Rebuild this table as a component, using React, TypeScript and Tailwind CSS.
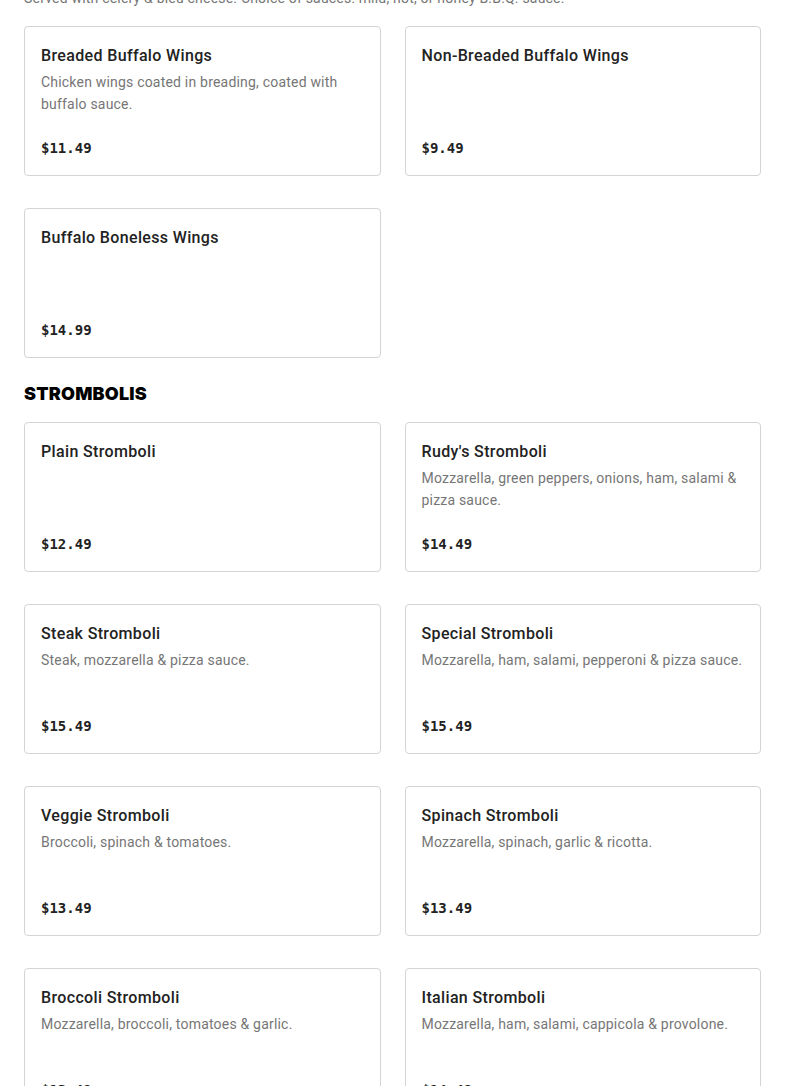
const wings = [
  { name: "Breaded Buffalo Wings", desc: "Chicken wings coated in breading, coated with buffalo sauce.", price: "$11.49" },
  { name: "Non-Breaded Buffalo Wings", desc: "", price: "$9.49" },
  { name: "Buffalo Boneless Wings", desc: "", price: "$14.99" },
];

const strombolis = [
  { name: "Plain Stromboli", desc: "", price: "$12.49" },
  { name: "Rudy's Stromboli", desc: "Mozzarella, green peppers, onions, ham, salami & pizza sauce.", price: "$14.49" },
  { name: "Steak Stromboli", desc: "Steak, mozzarella & pizza sauce.", price: "$15.49" },
  { name: "Special Stromboli", desc: "Mozzarella, ham, salami, pepperoni & pizza sauce.", price: "$15.49" },
  { name: "Veggie Stromboli", desc: "Broccoli, spinach & tomatoes.", price: "$13.49" },
  { name: "Spinach Stromboli", desc: "Mozzarella, spinach, garlic & ricotta.", price: "$13.49" },
  { name: "Broccoli Stromboli", desc: "Mozzarella, broccoli, tomatoes & garlic.", price: "$13.49" },
  { name: "Italian Stromboli", desc: "Mozzarella, ham, salami, cappicola & provolone.", price: "$14.49" },
];

type Item = { name: string; desc: string; price: string };

function MenuCard({ item }: { item: Item }) {
  return (
    <div className="h-[150px] border border-[#d4d4d4] rounded-[4px] bg-white px-4 pt-[17px] pb-[17px] flex flex-col">
      <h3 className="text-[16px] leading-[24px] font-medium text-[#222] tracking-[0.35px]">{item.name}</h3>
      {item.desc && (
        <p className="mt-[3px] text-[14px] leading-[22px] text-[#767676] tracking-[0.2px]">{item.desc}</p>
      )}
      <div className="mt-auto text-[14px] leading-[20px] font-bold text-[#222] font-['DejaVu_Sans_Mono',monospace]">
        {item.price}
      </div>
    </div>
  );
}

export default function App() {
  return (
    <div className="min-h-screen bg-white font-['Roboto','Liberation_Sans',sans-serif] overflow-hidden">
      <div className="px-6 mt-[-13px]">
        {/* Wings */}
        <p className="text-[14px] leading-[22px] text-[#767676] tracking-[0.2px] mb-[17px]">
          Served with celery &amp; bleu cheese. Choice of sauces: mild, hot, or honey B.B.Q. sauce.
        </p>
        <div className="grid grid-cols-2 gap-x-6 gap-y-8">
          {wings.map((w) => (
            <MenuCard key={w.name} item={w} />
          ))}
        </div>

        {/* Strombolis */}
        <h2 className="mt-[22px] mb-[14px] text-[18px] leading-[28px] font-black text-black tracking-[0.2px] font-['Inter',sans-serif]">
          STROMBOLIS
        </h2>
        <div className="grid grid-cols-2 gap-x-6 gap-y-8">
          {strombolis.map((s) => (
            <MenuCard key={s.name} item={s} />
          ))}
        </div>
      </div>
    </div>
  );
}
